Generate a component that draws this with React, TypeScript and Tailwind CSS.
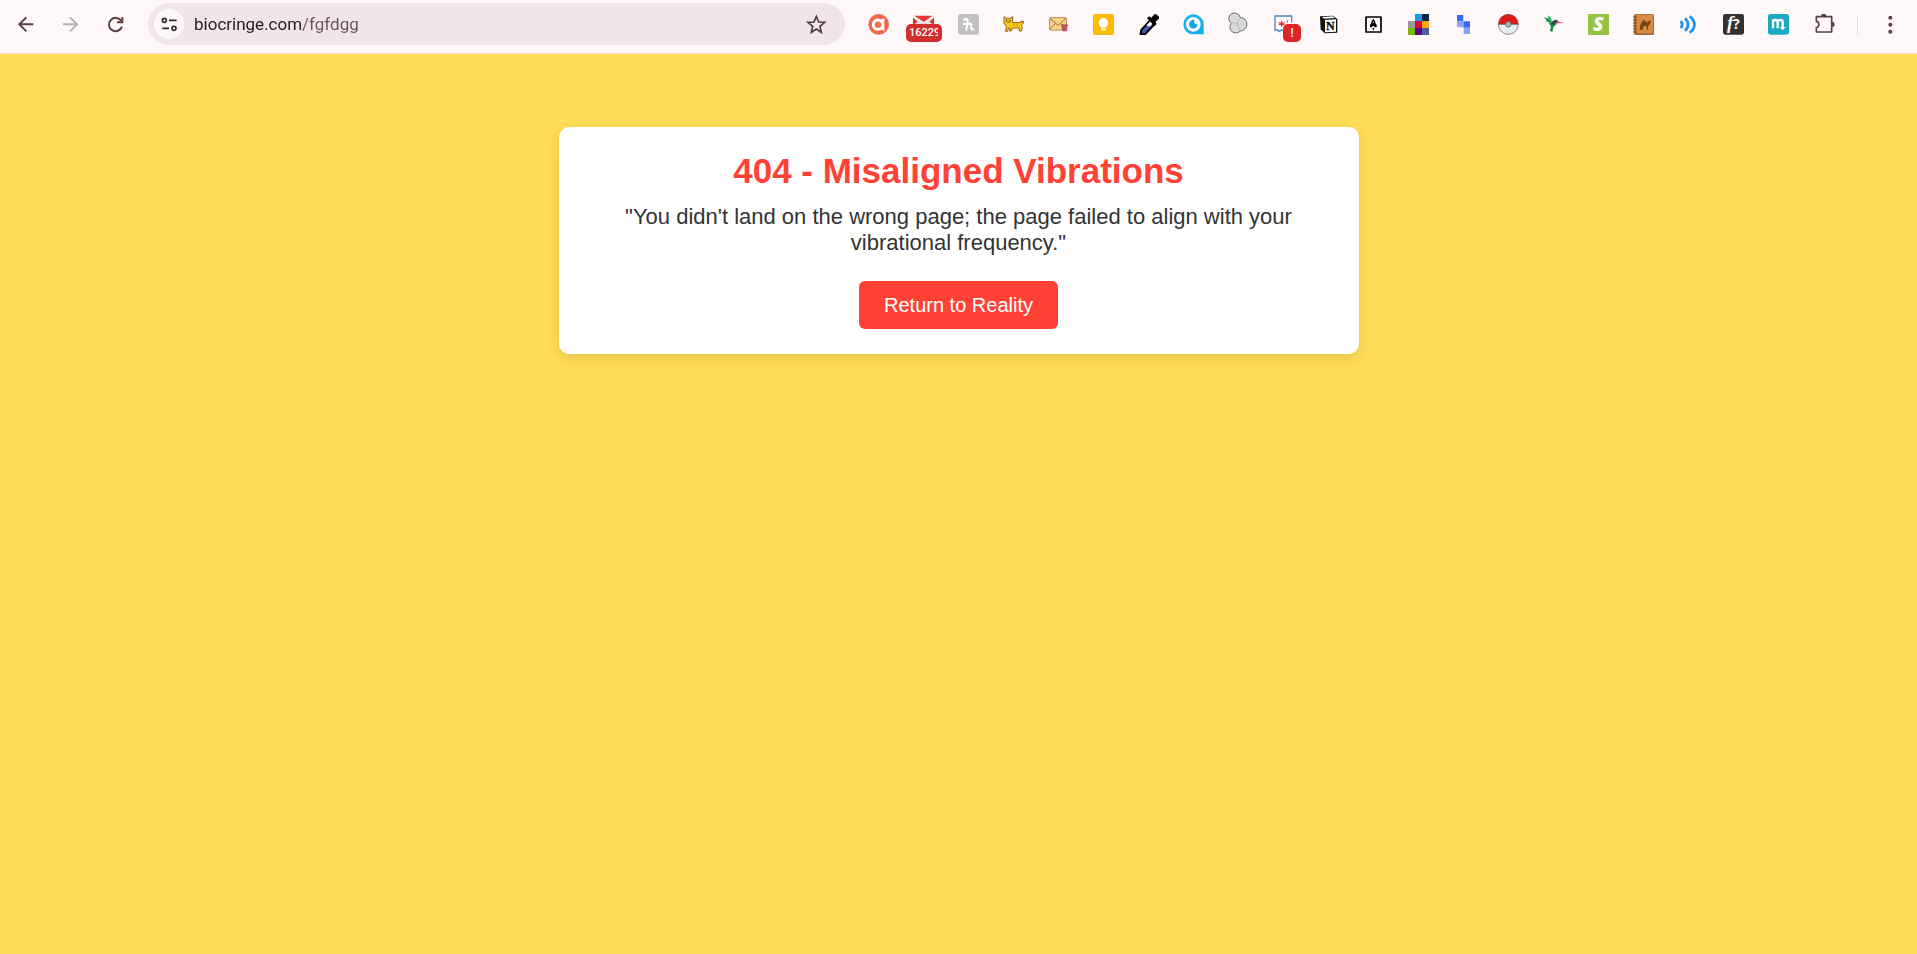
import React from 'react'

type GlyphProps = { children: React.ReactNode }

function Glyph({ children }: GlyphProps) {
  return (
    <svg viewBox="0 0 63 63" className="w-[21px] h-[21px] shrink-0 overflow-visible" fill="none" aria-hidden="true">
      {children}
    </svg>
  )
}

const extensions = [
  {
    name: 'Ask',
    art: (
      <>
        <circle cx="32" cy="31" r="31" fill="#f4694e" />
        <circle cx="30" cy="32" r="14" stroke="#fff" strokeWidth="9" />
        <path d="M45 14v35" stroke="#fff" strokeWidth="8" />
      </>
    )
  },
  {
    name: 'Mail checker',
    badge: '16229',
    art: (
      <>
        <path d="M0 10v30h63V10L32 28z" fill="#f3dedd" />
        <path d="M4 5h55L32 24z" fill="#e23b33" />
        <path d="M0 11l14 12-14 10zM63 11L49 23l14 10z" fill="#d93025" />
      </>
    )
  },
  {
    name: 'Honey',
    art: (
      <>
        <rect width="63" height="62" rx="7" fill="#c1c1c1" />
        <path d="M18 18c5-5 12-4 11 3l-4 26M17 30h17M26 35c4-9 16-9 14 0-1 6-3 12 5 10" stroke="#fff" strokeWidth="6" strokeLinecap="round" />
      </>
    )
  },
  {
    name: 'Cat',
    art: (
      <>
        <path d="M3 8l7 5h12l7-5v18h23l1-4h9v5h-4l-2 11 2 5-3 8h-6l-1-9H28l-3 9h-5l1-9h-5l-2 10H8l2-15-7-8z" fill="#f5ca18" stroke="#a65c18" strokeWidth="3" />
        <path d="M9 17h3v5H9zM20 17h3v5h-3z" fill="#342511" />
        <path d="M13 24h8M33 32v3M43 32v3" stroke="#8a4c13" strokeWidth="3" />
      </>
    )
  },
  {
    name: 'Mail cleaner',
    art: (
      <>
        <rect x="5" y="11" width="50" height="37" rx="3" fill="#f9d583" stroke="#b78550" strokeWidth="3" />
        <path d="M6 13l24 21 24-21M6 46l17-18M38 28l16 17" stroke="#9e6d42" strokeWidth="3" />
        <path d="M40 33h19l-2 19H43z" fill="#bd555b" />
        <path d="M39 33h21" stroke="#964248" strokeWidth="3" />
      </>
    )
  },
  {
    name: 'Keep',
    art: (
      <>
        <rect width="63" height="63" rx="6" fill="#fbbc04" />
        <path d="M31 12a15 15 0 0 0-8 27v2h16v-2a15 15 0 0 0-8-27z" fill="#fff" />
        <path d="M24 44h15v5H24z" fill="#fff" />
      </>
    )
  },
  {
    name: 'Colour picker',
    art: (
      <>
        <path d="M8 60l2-12 25-27 12 12-25 27z" fill="#475cb0" stroke="#000" strokeWidth="6" />
        <path d="M25 34l12-12 7 7-9 9z" fill="#eef0fa" />
        <path d="M27 13l7-6 6 4 9-10 5-1 9 8v6L52 24l4 6-6 6z" fill="#000" />
      </>
    )
  },
  {
    name: 'Watch',
    art: (
      <>
        <path d="M31 1a30 30 0 1 0 0 60h31V31A30 30 0 0 0 31 1z" fill="#17aef5" />
        <circle cx="31" cy="31" r="22" fill="#fff" />
        <path d="M34 18a13 13 0 1 0 10 12c-5 3-13-2-10-12z" fill="#17a2e8" />
      </>
    )
  },
  {
    name: 'Clover',
    art: (
      <>
        <path d="M36 10a17 17 0 1 0-26 18 16 16 0 1 0 26 23A18 18 0 1 0 36 10z" fill="#d9d9d9" stroke="#6b6b6b" strokeWidth="3" />
        <path d="M10 28c9-4 18-1 20 7M38 13c-9 4-11 12-7 21M37 49c-4-2-6-7-6-14" stroke="#b3b3b3" strokeWidth="3" />
      </>
    )
  },
  {
    name: 'Coupons',
    badge: '!',
    art: (
      <>
        <path d="M8 6h46v12M33 51h-8l-5 5-5-5H6V8" fill="#fff" />
        <path d="M30 49l-6-1-5 5-5-5H6V6h50v19" stroke="#4f83b8" strokeWidth="4" />
        <path d="M26 20v18M17 26l18 7M35 26l-18 7" stroke="#e0343c" strokeWidth="4" />
        <path d="M43 18v8" stroke="#4f83b8" strokeWidth="3" />
      </>
    )
  },
  {
    name: 'Notion',
    art: (
      <>
        <path d="M6 7l39-2 13 10v41l-38 2L8 46z" fill="#111" />
        <path d="M12 9l32-2 7 5-33 2zM21 18l33-2v37l-33 2z" fill="#fff" />
        <text x="37" y="49" textAnchor="middle" fontFamily="Liberation Serif, serif" fontSize="36" fontWeight="700" fill="#111" stroke="#111">N</text>
      </>
    )
  },
  {
    name: 'Rocket',
    art: (
      <>
        <rect x="9" y="9" width="45" height="45" rx="1" stroke="#000" strokeWidth="5" />
        <path d="M31 14c-5 5-6 8-6 13l-4 5v8h6l1-3h6l1 3h6v-8l-4-5c0-5-1-8-6-13zM28 42h6l-3 8z" fill="#000" />
        <circle cx="31" cy="25" r="2" fill="#fff" />
      </>
    )
  },
  {
    name: 'Swatches',
    art: (
      <>
        <path d="M21 0h21v21H21z" fill="#169be6" />
        <path d="M42 0h21v21H42z" fill="#08263d" />
        <path d="M0 21h21v21H0z" fill="#999" />
        <path d="M21 21h21v21H21z" fill="#df0038" />
        <path d="M42 21h21v21H42z" fill="#ffa714" />
        <path d="M0 42h21v21H0z" fill="#7ab800" />
        <path d="M21 42h21v21H21z" fill="#590089" />
        <path d="M42 42h21v21H42z" fill="#4b5f98" />
      </>
    )
  },
  {
    name: 'Blocks',
    art: (
      <>
        <path d="M12 3h19v19H12zM31 22h20v19H31z" fill="#3c67f6" />
        <path d="M12 22h19v18H12zM32 41h19v19H32z" fill="#8ba2fb" />
      </>
    )
  },
  {
    name: 'Pokeball',
    art: (
      <>
        <circle cx="31" cy="31" r="30" fill="#e4eef1" />
        <path d="M1 31a30 30 0 0 1 60 0z" fill="#e01818" />
        <circle cx="31" cy="31" r="30" stroke="#6b4747" strokeWidth="2" />
        <path d="M1 31h60" stroke="#555" strokeWidth="2" />
        <circle cx="31" cy="31" r="8" fill="#d5dfe2" stroke="#58646a" strokeWidth="3" />
        <circle cx="31" cy="31" r="3" stroke="#58646a" strokeWidth="2" />
      </>
    )
  },
  {
    name: 'Hummingbird',
    art: (
      <>
        <path d="M2 10l17 4 7 13-9-2-9-5 4-1z" fill="#138f4a" />
        <path d="M13 4l10 6 5 16-8-6z" fill="#25b967" />
        <path d="M18 26c9 0 12-9 21-9 6 0 7 5 3 9-3 5-8 9-11 14l-3 14-8-4 4-10z" fill="#168d49" />
        <path d="M26 29c5-8 11-12 17-9l3 4-9 2-6 6z" fill="#24363a" />
        <path d="M36 27l7-5 19 4-18 2-8 7z" fill="#e44f91" />
      </>
    )
  },
  {
    name: 'Shop inspector',
    art: (
      <>
        <path d="M0 0h63v63H0z" fill="#95c345" />
        <text x="31" y="52" textAnchor="middle" fontFamily="Open Sans, sans-serif" fontSize="58" fontWeight="800" fontStyle="italic" fill="#fff">S</text>
      </>
    )
  },
  {
    name: 'Camel notebook',
    art: (
      <>
        <rect x="3" width="60" height="63" rx="5" fill="#a86b32" />
        <rect x="9" y="2" width="51" height="56" rx="3" fill="#d78b43" />
        <path d="M0 9h12M0 18h12M0 27h12M0 36h12M0 45h12M0 54h12" stroke="#69472b" strokeWidth="3" />
        <path d="M20 48l2-15c2-7 6-7 8-14 4-3 6 1 8 6 3-6 5-4 6 2l5-8 5 2-2 5c-2 6-4 9-7 10v11h-4V36l-9 1-3 11h-4l1-9-2 9z" fill="#754415" />
      </>
    )
  },
  {
    name: 'Read aloud',
    art: (
      <>
        <path d="M8 21c6 6 6 15 0 21M21 13c12 10 12 27 0 37M35 7c19 13 19 36 0 49" stroke="#1690f4" strokeWidth="8" />
      </>
    )
  },
  {
    name: 'Font finder',
    art: (
      <>
        <rect width="63" height="62" rx="7" fill="#333" />
        <text x="31" y="46" textAnchor="middle" fontFamily="Liberation Serif, serif" fontSize="56" fontWeight="700" fontStyle="italic" fill="#fff">
          f<tspan fontFamily="Open Sans, sans-serif" fontSize="42" fontStyle="normal">?</tspan>
        </text>
      </>
    )
  },
  {
    name: 'Momentum',
    art: (
      <>
        <rect width="63" height="62" rx="7" fill="#1ba9c2" />
        <path d="M15 43V16M15 24c2-8 14-8 14 0v19M29 24c2-8 15-8 15 0v19" stroke="#fff" strokeWidth="7" />
        <path d="M35 39h18l-9 10z" fill="#fff" />
      </>
    )
  },
  {
    name: 'Extensions',
    art: (
      <>
        <path d="M11 8h45v46H10V41c10-1 10-18 0-19V8z" stroke="#5c3f45" strokeWidth="5" strokeLinejoin="round" />
        <path d="M24 7a8 8 0 0 1 16 0zM57 23a8 8 0 0 1 0 16z" fill="#5c3f45" />
      </>
    )
  }
]

function BrowserBar() {
  return (
    <header className="flex h-[54px] border-b border-[#e9dfd5] bg-[#fff8f8] pt-[3px] pl-[3px] pr-1" style={{ fontFamily: 'Roboto, sans-serif' }}>
      <nav className="flex h-[43px] items-center" aria-label="Browser">
        <button className="flex w-[45px] justify-center" aria-label="Back">
          <Glyph>
            <path d="M55 31H14M34 10L13 31l21 21" stroke="#5c3f45" strokeWidth="6" />
          </Glyph>
        </button>
        <button className="flex w-[45px] justify-center" aria-label="Forward">
          <Glyph>
            <path d="M9 31h41M30 10l21 21-21 21" stroke="#b8adaf" strokeWidth="6" />
          </Glyph>
        </button>
        <button className="flex w-[45px] justify-center" aria-label="Reload">
          <Glyph>
            <path d="M49 21a20 20 0 1 0 2 17" stroke="#5c3f45" strokeWidth="6" />
            <path d="M52 9v16H36" stroke="#5c3f45" strokeWidth="6" />
          </Glyph>
        </button>
      </nav>

      <div className="ml-[10px] flex h-[42px] min-w-0 flex-1 items-center rounded-full bg-[#f2e4eb] pl-[6px] pr-[18px]">
        <button className="flex h-[30px] w-[30px] shrink-0 items-center justify-center rounded-full bg-[#fff8f8]" aria-label="Site information">
          <Glyph>
            <g stroke="#35282c" strokeWidth="5">
              <circle cx="16" cy="19" r="6" />
              <path d="M30 19h23M10 43h20" />
              <circle cx="45" cy="43" r="6" />
            </g>
          </Glyph>
        </button>
        {/* The gradient dims everything after the domain */}
        <input
          type="text"
          aria-label="Address"
          defaultValue="biocringe.com/fgfdgg"
          className="ml-[10px] min-w-0 flex-1 bg-[linear-gradient(90deg,#251a1d_108px,#66545a_108px)] bg-clip-text text-[17px] leading-6 text-transparent caret-[#251a1d] outline-none"
        />
        <button aria-label="Bookmark this page">
          <Glyph>
            <path d="M31 7l7 17 18 1-14 12 4 18-15-10-15 10 4-18L6 25l18-1z" stroke="#4c3a40" strokeWidth="5" />
          </Glyph>
        </button>
      </div>

      <div className="ml-[11px] flex h-[43px] items-center">
        {extensions.map((extension) => (
          <button key={extension.name} className="relative flex w-[45px] justify-center" aria-label={extension.name}>
            <Glyph>{extension.art}</Glyph>
            {extension.badge && (
              <span
                className={
                  extension.badge.length > 1
                    ? 'absolute left-[5px] top-[10px] h-[18px] w-[36px] rounded-[5px] bg-[#d32f2f] pl-[3px] pr-1 text-[11px] font-medium leading-[18px] text-white'
                    : 'absolute left-[22px] top-[10px] h-[18px] w-[18px] rounded-[5px] bg-[#dd2428] text-[12px] font-medium leading-[18px] text-white'
                }
              >
                <span className="block overflow-hidden">{extension.badge}</span>
              </span>
            )}
          </button>
        ))}
        <div className="ml-[11px] h-5 w-px bg-[#fbd5dc]" />
        <button className="ml-[10px] flex w-[45px] justify-center" aria-label="Menu">
          <Glyph>
            <g fill="#5c3f45">
              <circle cx="31" cy="11" r="6" />
              <circle cx="31" cy="32" r="6" />
              <circle cx="31" cy="53" r="6" />
            </g>
          </Glyph>
        </button>
      </div>
    </header>
  )
}

export default function App() {
  return (
    <div className="min-h-screen bg-[#ffdd57]">
      <BrowserBar />
      <main className="px-5 pt-[73px]" style={{ fontFamily: '"Liberation Sans", Arial, sans-serif' }}>
        <section className="mx-auto max-w-[800px] rounded-[10px] bg-white p-[25px] text-center shadow-[0_5px_15px_rgba(0,0,0,0.1)]">
          <h1 className="text-[35px] font-bold leading-[38px] text-[#ff4136]">404 - Misaligned Vibrations</h1>
          <p className="mt-[14px] px-6 text-[22px] leading-[26px] text-[#333]">
            "You didn't land on the wrong page; the page failed to align with your vibrational frequency."
          </p>
          <a href="/" className="mt-[25px] inline-block rounded-md bg-[#ff4136] px-[25px] py-3 text-[20px] leading-6 text-white">
            Return to Reality
          </a>
        </section>
      </main>
    </div>
  )
}
